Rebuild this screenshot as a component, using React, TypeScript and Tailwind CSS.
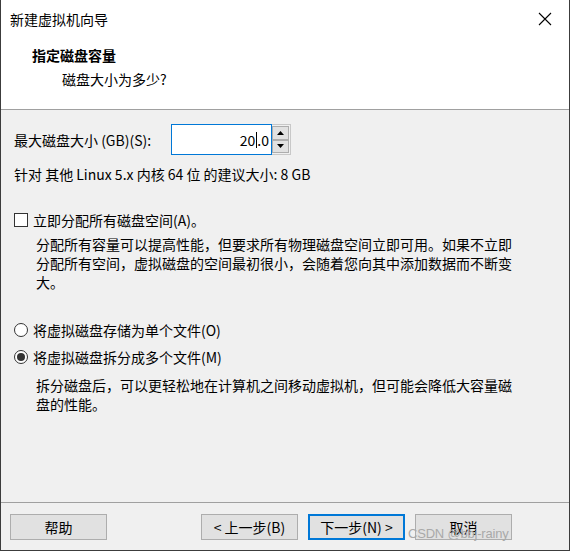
import React from "react";

const font = { fontFamily: '"Noto Sans CJK SC", "Microsoft YaHei", sans-serif' };

const App: React.FC = () => {
  return (
    <div
      className="w-[570px] h-[551px] bg-[#f0f0f0] border-x border-b border-[#3c3c3c] flex flex-col text-[14px] text-black overflow-hidden"
      style={font}
    >
      {/* header */}
      <div className="bg-white h-[110px] border-b border-[#a0a0a0] flex flex-col">
        <div className="h-[37px] flex items-center justify-between pl-[9px] pr-[17px]">
          <span className="leading-none">新建虚拟机向导</span>
          <svg width="14" height="14" viewBox="0 0 14 14">
            <path d="M1 1 L13 13 M13 1 L1 13" stroke="#000" strokeWidth="1.1" />
          </svg>
        </div>
        <div className="pl-[31px] pt-[8px] font-bold leading-[20px]">指定磁盘容量</div>
        <div className="pl-[61px] pt-[4px] leading-[20px]">磁盘大小为多少?</div>
      </div>

      {/* body */}
      <div className="flex-1 flex flex-col pl-[13px] pr-[14px]">
        <div className="flex items-center mt-[14px] h-[31px]">
          <span className="w-[157px] leading-none">最大磁盘大小 (GB)(S):</span>
          <div className="flex h-[31px]">
            <div className="w-[101px] h-full bg-white border border-[#0078d7] flex items-center justify-end pr-[2px] leading-none">
              20<span className="inline-block w-px h-[16px] bg-black mx-[0.5px]" />.0
            </div>
            <div className="flex flex-col w-[19px] h-full border-y border-r border-[#c8c8c8] bg-[#f0f0f0] py-[1px] pr-[1px]">
              <div className="flex-1 bg-[#e1e1e1] border border-[#adadad] flex items-center justify-center">
                <svg width="7" height="4" viewBox="0 0 7 4"><path d="M0 4 L3.5 0 L7 4 Z" fill="#000" /></svg>
              </div>
              <div className="flex-1 bg-[#e1e1e1] border border-[#adadad] flex items-center justify-center">
                <svg width="7" height="4" viewBox="0 0 7 4"><path d="M0 0 L3.5 4 L7 0 Z" fill="#000" /></svg>
              </div>
            </div>
          </div>
        </div>
        <div className="mt-[9px] leading-[20px]">针对 其他 Linux 5.x 内核 64 位 的建议大小: 8 GB</div>

        <div className="flex items-center mt-[26px] h-[20px]">
          <span className="w-[14px] h-[14px] border border-[#333] bg-white mr-[5px]" />
          <span>立即分配所有磁盘空间(A)。</span>
        </div>
        <div className="pl-[22px] mt-[5px] leading-[19px] whitespace-nowrap">
          分配所有容量可以提高性能，但要求所有物理磁盘空间立即可用。如果不立即
          <br />
          分配所有空间，虚拟磁盘的空间最初很小，会随着您向其中添加数据而不断变
          <br />
          大。
        </div>

        <div className="flex items-center mt-[28px] h-[20px]">
          <span className="w-[14px] h-[14px] rounded-full border border-[#333] bg-white mr-[5px]" />
          <span>将虚拟磁盘存储为单个文件(O)</span>
        </div>
        <div className="flex items-center mt-[7px] h-[20px]">
          <span className="w-[14px] h-[14px] rounded-full border border-[#333] bg-white mr-[5px] flex items-center justify-center">
            <span className="w-[8px] h-[8px] rounded-full bg-[#333]" />
          </span>
          <span>将虚拟磁盘拆分成多个文件(M)</span>
        </div>
        <div className="pl-[22px] mt-[9px] leading-[19px] whitespace-nowrap">
          拆分磁盘后，可以更轻松地在计算机之间移动虚拟机，但可能会降低大容量磁
          <br />
          盘的性能。
        </div>
      </div>

      {/* footer */}
      <div className="h-[48px] border-t border-[#a0a0a0] flex items-center pl-[9px] pr-[57px] relative">
        <button className="w-[97px] h-[26px] bg-[#e1e1e1] border border-[#adadad] leading-none">帮助</button>
        <div className="flex-1" />
        <button className="w-[97px] h-[26px] bg-[#e1e1e1] border border-[#adadad] leading-none">&lt; 上一步(B)</button>
        <button className="w-[97px] h-[26px] ml-[10px] bg-[#e1e1e1] border-2 border-[#0078d7] leading-none">下一步(N) &gt;</button>
        <button className="w-[97px] h-[26px] ml-[10px] bg-[#e1e1e1] border border-[#adadad] leading-none">取消</button>
        <span
          className="absolute left-[407px] top-[24px] text-[13px] text-[#a9a9a9] leading-none tracking-[-0.2px]"
          style={{ fontFamily: '"Liberation Sans", Arial, sans-serif' }}
        >
          CSDN @bbj-rainy
        </span>
      </div>
    </div>
  );
};

export default App;
